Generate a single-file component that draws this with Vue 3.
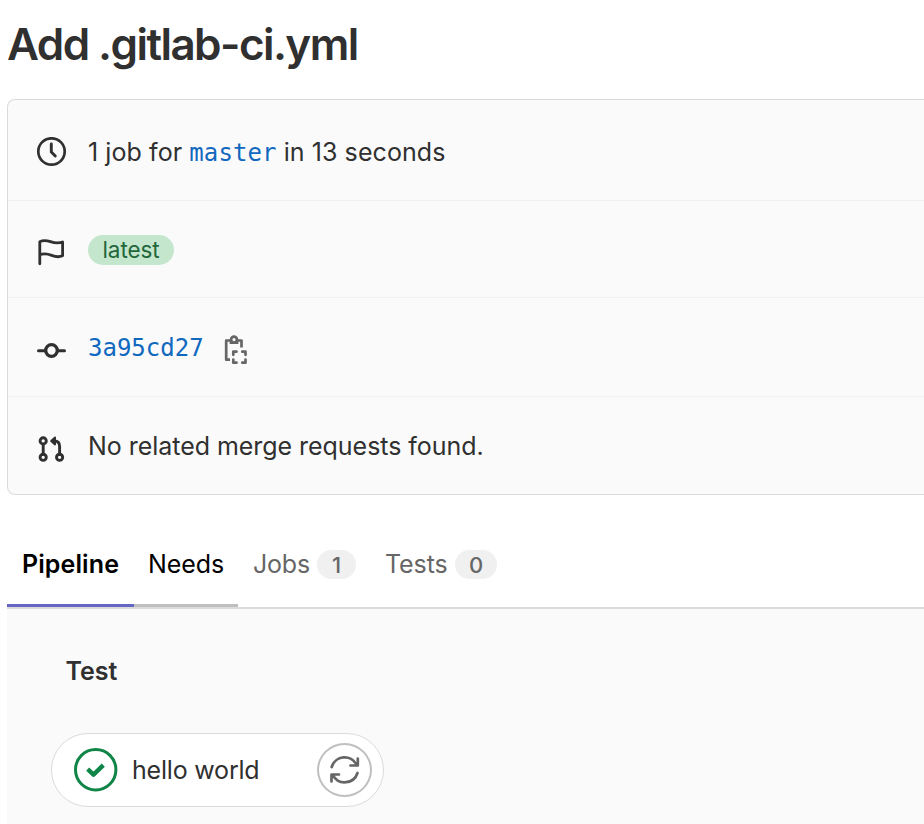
<script setup>
const tabs = [
  { name: 'Pipeline', state: 'active' },
  { name: 'Needs', state: 'hovered' },
  { name: 'Jobs', state: 'idle', count: 1 },
  { name: 'Tests', state: 'idle', count: 0 },
]
</script>

<template>
  <main class="page">
    <h1 class="title">Add .gitlab-ci.yml</h1>

    <section class="card">
      <div class="row row-jobs">
        <svg class="icon" viewBox="0 0 30 30" fill="none" stroke="#303030">
          <circle cx="15.5" cy="14.5" r="13.2" stroke-width="2.7" />
          <path d="M15.3 7v8l4 4" stroke-width="2.9" stroke-linecap="round" stroke-linejoin="round" />
        </svg>
        <p class="text summary">1 job for <a class="mono ref">master</a> in 13 seconds</p>
      </div>
      <div class="row row-label">
        <svg class="icon" viewBox="0 0 30 30" fill="none" stroke="#303030" stroke-width="2.8" stroke-linecap="round" stroke-linejoin="round">
          <path d="M3.8 25.8V3.700C12.500 -0.800 16 8 26.600 4V17.800C17 22 14.500 12.700 3.800 16.700" />
        </svg>
        <span class="badge-latest">latest</span>
      </div>
      <div class="row row-commit">
        <svg class="icon" viewBox="0 0 30 30" fill="none" stroke="#303030" stroke-linecap="round">
          <path d="M2.500 14.700h6.500M22 14.700h6.500" stroke-width="3" />
          <circle cx="15.500" cy="14.500" r="5.800" stroke-width="3.300" />
        </svg>
        <a class="mono sha">3a95cd27</a>
        <svg class="copy" viewBox="0 0 24 30" fill="none" stroke="#666" stroke-width="2.700" stroke-linejoin="round">
          <path d="M7 5.500H2.200V24.700H6M17.500 12.500V5.500H13" />
          <path d="M5.600 4.500H14.400V9H5.600Z" fill="#666" stroke="none" />
          <circle cx="10" cy="4.600" r="2.900" stroke-width="2.700" fill="#fafafa" />
          <path d="M9.300 19.800V16.700H12.500M18.300 16.700H21.500V19.800M21.500 24.500V27.700H18.300M12.500 27.700H9.300V24.500" stroke-linecap="round" stroke-width="2.700" />
        </svg>
      </div>
      <div class="row row-merge">
        <svg class="icon" viewBox="0 0 30 30" fill="none" stroke="#303030" stroke-width="2.900" stroke-linejoin="round" stroke-linecap="round">
          <circle cx="7.200" cy="5.900" r="3.100" />
          <circle cx="7.200" cy="22.300" r="3.100" />
          <circle cx="23.600" cy="22.300" r="3.100" />
          <path d="M7.200 9.200V19.200M23.600 19.200V11.200Q23.600 6.200 18.500 6H16.500" />
          <path d="M19 2.600L15.200 6L19 9.400Z" fill="#303030" stroke-width="2" />
        </svg>
        <p class="text none-found">No related merge requests found.</p>
      </div>
    </section>

    <nav class="tabs">
      <a v-for="tab in tabs" :key="tab.name" class="tab" :class="[tab.state, tab.name.toLowerCase()]">
        <span class="tab-name">{{ tab.name }}</span>
        <span v-if="tab.count !== undefined" class="count">{{ tab.count }}</span>
      </a>
    </nav>

    <section class="graph">
      <h2 class="stage">Test</h2>
      <div class="job">
        <svg class="status" viewBox="0 0 44 44" fill="none" stroke="#108548">
          <circle cx="21.700" cy="21.700" r="20.200" stroke-width="3" />
          <path d="M13.700 21.200L19.500 26.700L29.300 17.200" stroke-width="4.400" stroke-linejoin="round" />
        </svg>
        <span class="job-name">hello world</span>
        <button class="retry" aria-label="Retry">
          <svg viewBox="0 0 30 30" fill="none" stroke="#666" stroke-width="2.700" stroke-linecap="round" stroke-linejoin="round">
            <path d="M1.700 12A13.400 13.400 0 0 1 26.500 9.700M20.500 10.500H27.800V3.500" />
            <path d="M27.500 18A13.400 13.400 0 0 1 3 20.300M9 19.500H1.500V26.500" />
          </svg>
        </button>
      </div>
    </section>
  </main>
</template>

<style>
body {
  margin: 0;
  background: #fff;
  overflow: hidden;
}
</style>

<style scoped>
.page {
  box-sizing: border-box;
  width: 924px;
  height: 824px;
  padding-left: 7px;
  overflow: hidden;
  display: flex;
  flex-direction: column;
  font-family: Inter, "Liberation Sans", sans-serif;
  font-size: 25px;
  color: #303030;
}
.title {
  margin: 0;
  height: 99px;
  line-height: 89px;
  box-sizing: border-box;
  font-size: 44px;
  font-weight: 600;
  letter-spacing: -1.57px;
  white-space: nowrap;
}
.card {
  box-sizing: border-box;
  height: 396px;
  border: 1px solid #dbdbdb;
  border-right: 0;
  border-radius: 8px 0 0 8px;
  background: #fafafa;
}
.row {
  box-sizing: border-box;
  display: flex;
  align-items: center;
  padding-left: 28px;
  border-bottom: 1px solid #f0f0f0;
  white-space: nowrap;
}
.row-jobs { height: 101px; padding-top: 4px; }
.row-label { height: 97px; padding-top: 2px; }
.row-commit { height: 99px; padding-top: 2px; }
.row-merge { height: 97px; border-bottom: 0; padding-top: 1px; }
.icon {
  flex: none;
  width: 30px;
  height: 30px;
  margin-right: 22px;
}
.row-label .icon { margin-top: 5px; }
.row-commit .icon { margin-top: 6px; }
.row-merge .icon { margin-top: 7px; }
.text { margin: 0; line-height: 32px; }
.summary { letter-spacing: 0.08px; }
.none-found { letter-spacing: -0.04px; }
.mono {
  font-family: "DejaVu Sans Mono", monospace;
  font-size: 24px;
  color: #1068bf;
}
.sha { line-height: 32px; }
.copy { width: 24px; height: 30px; margin: 4px 0 0 20px; }
.badge-latest {
  width: 86px;
  height: 30px;
  border-radius: 15px;
  background: #c3e6cd;
  color: #24663b;
  font-size: 22.5px;
  letter-spacing: -0.1px;
  line-height: 30px;
  text-align: center;
}
.tabs {
  flex: none;
  box-sizing: border-box;
  display: flex;
  height: 114px;
  padding-top: 29px;
  border-bottom: 2px solid #dbdbdb;
}
.tab {
  box-sizing: border-box;
  display: flex;
  align-items: center;
  padding: 0 0 1px 15px;
  color: #666;
  border-bottom: 3px solid transparent;
}
.tab.active {
  width: 127px;
  color: #000;
  font-weight: 600;
  letter-spacing: 0.1px;
  border-color: #6666c4;
}
.tab.hovered {
  width: 104px;
  padding-left: 14px;
  color: #000;
  letter-spacing: -0.1px;
  border-color: #bfbfbf;
}
.tab.jobs { width: 133px; }
.tab.jobs .tab-name { width: 64px; letter-spacing: -0.2px; }
.tab.tests { padding-left: 14px; }
.tab.tests .tab-name { width: 70px; letter-spacing: -0.1px; }
.count {
  width: 39px;
  height: 29px;
  margin-top: 2px;
  border-radius: 15px;
  background: #f0f0f0;
  font-size: 22px;
  font-weight: 450;
  line-height: 30px;
  text-align: center;
}
.tests .count { width: 42px; }
.graph {
  flex: 1;
  background: #fafafa;
  padding: 46px 0 0 44px;
}
.stage {
  margin: 0 0 46px 14.5px;
  font-size: 25px;
  font-weight: 600;
  line-height: 32px;
}
.job {
  box-sizing: border-box;
  display: flex;
  align-items: center;
  width: 333px;
  height: 74px;
  padding: 0 11px 0 22px;
  border: 1px solid #dbdbdb;
  border-radius: 37px;
  background: #fff;
}
.status { flex: none; width: 44px; height: 44px; }
.job-name { margin-left: 14px; line-height: 32px; white-space: nowrap; letter-spacing: -0.2px; }
.retry {
  box-sizing: border-box;
  display: flex;
  align-items: center;
  justify-content: center;
  width: 55px;
  height: 54px;
  margin-left: auto;
  padding: 0;
  border: 2px solid #bfbfbf;
  border-radius: 50%;
  background: #fff;
}
.retry svg { width: 30px; height: 30px; }
</style>
